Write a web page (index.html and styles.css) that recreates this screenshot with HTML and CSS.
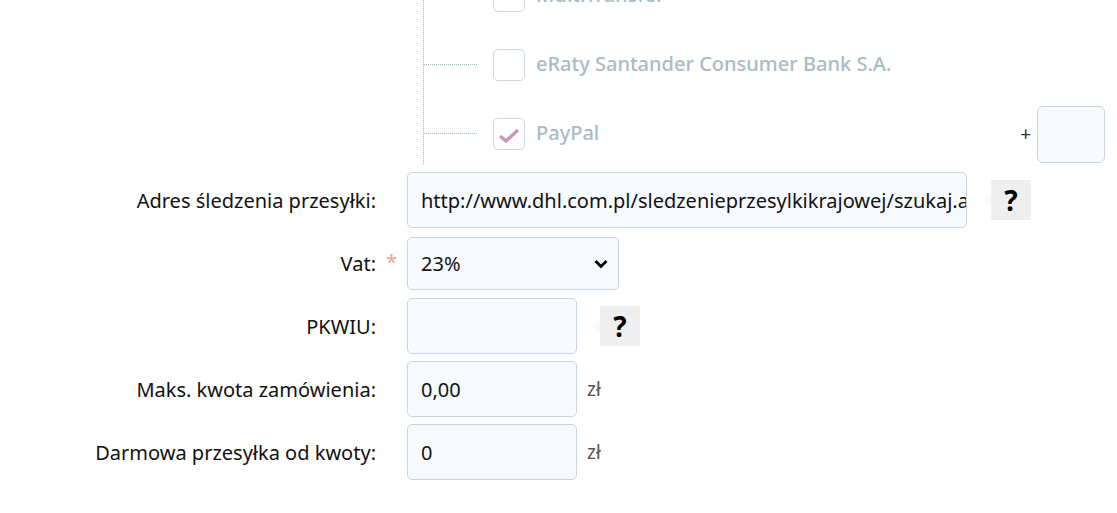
FILE: index.html
```html
<!DOCTYPE html>
<html lang="pl">
<head>
<meta charset="utf-8">
<title>Form</title>
<link rel="stylesheet" href="styles.css">
</head>
<body>
<div class="page">
  <div class="tree-wrap">
    <ul class="tree">
      <li class="tree-item">
        <span class="branch"></span>
        <span class="check"></span>
        <span class="tree-label">MultiTransfer</span>
      </li>
      <li class="tree-item">
        <span class="branch"></span>
        <span class="check"></span>
        <span class="tree-label">eRaty Santander Consumer Bank S.A.</span>
      </li>
      <li class="tree-item">
        <span class="branch"></span>
        <span class="check checked">
          <svg width="22" height="16" viewBox="0 0 22 16"><path d="M2 9 L8 14 L20 3" fill="none" stroke="#c898bb" stroke-width="3.4" stroke-linejoin="miter"/></svg>
        </span>
        <span class="tree-label">PayPal</span>
        <span class="extra">
          <span class="plus">+</span>
          <span class="extra-box"></span>
        </span>
      </li>
    </ul>
  </div>

  <form class="form">
    <div class="row">
      <label class="lbl">Adres śledzenia przesyłki:</label>
      <div class="ctrl">
        <div class="input wide">http://www.dhl.com.pl/sledzenieprzesylkikrajowej/szukaj.aspx</div>
        <span class="help">?</span>
      </div>
    </div>
    <div class="row">
      <label class="lbl req">Vat:<span class="star">*</span></label>
      <div class="ctrl">
        <div class="input select">
          <span>23%</span>
          <svg width="14" height="10" viewBox="0 0 14 10"><path d="M1.5 2 L7 7.5 L12.5 2" fill="none" stroke="#000" stroke-width="2.8"/></svg>
        </div>
      </div>
    </div>
    <div class="row">
      <label class="lbl">PKWIU:</label>
      <div class="ctrl">
        <div class="input short"></div>
        <span class="help">?</span>
      </div>
    </div>
    <div class="row">
      <label class="lbl">Maks. kwota zamówienia:</label>
      <div class="ctrl">
        <div class="input short">0,00</div>
        <span class="unit">zł</span>
      </div>
    </div>
    <div class="row">
      <label class="lbl">Darmowa przesyłka od kwoty:</label>
      <div class="ctrl">
        <div class="input short">0</div>
        <span class="unit">zł</span>
      </div>
    </div>
  </form>
</div>
</body>
</html>
```

FILE: styles.css
```css
* { box-sizing: border-box; }
html, body { margin: 0; padding: 0; background: #fff; }
body {
  font-family: "Noto Sans", "Open Sans", sans-serif;
  font-size: 20px;
  color: #111;
  width: 1117px;
  height: 513px;
  overflow: hidden;
}
.page { padding-right: 12px; }

.tree-wrap {
  padding-left: 423px;
  margin-top: -39px;
}
.tree {
  list-style: none;
  margin: 0;
  padding: 0;
  border-left: 1px dotted #a6bcbc;
  height: 204px;
}
.tree-item {
  height: 69px;
  display: flex;
  align-items: center;
}
.branch {
  width: 53px;
  border-top: 1px dotted #a6bcbc;
  margin-right: 16px;
}
.check {
  width: 32px;
  height: 32px;
  border: 1px solid #cad7e2;
  border-radius: 5px;
  background: #fff;
  display: flex;
  align-items: center;
  justify-content: center;
  flex: none;
}
.check svg { margin-top: 2px; margin-left: -1px; }
.tree-label {
  margin-left: 11px;
  color: #a8bbc6;
  font-weight: 500;
  font-size: 20px;
  margin-top: -2px;
}
.extra {
  margin-left: auto;
  display: flex;
  align-items: center;
  gap: 6px;
}
.plus { color: #333; font-size: 19px; }
.extra-box {
  width: 68px;
  height: 57px;
  border: 1px solid #c9d5e0;
  border-radius: 6px;
  background: #f7fbff;
  margin-top: 1px;
}

.form {
  display: flex;
  flex-direction: column;
  gap: 7px;
  margin-top: 7px;
}
.row {
  display: grid;
  grid-template-columns: 376px auto;
  column-gap: 31px;
  align-items: center;
}
.lbl {
  text-align: right;
  color: #111;
  position: relative;
}
.star {
  position: absolute;
  right: -21px;
  top: -2px;
  color: #f39a9a;
  font-size: 20px;
}
.ctrl {
  display: flex;
  align-items: center;
}
.input {
  height: 56px;
  border: 1px solid #c9d5e0;
  border-radius: 5px;
  background: #f7fbff;
  padding: 0 13px;
  display: flex;
  align-items: center;
  white-space: nowrap;
  overflow: hidden;
  color: #111;
}
.wide { width: 560px; }
.short { width: 170px; }
.select {
  width: 212px;
  height: 53px;
  margin: 2px 0 1px;
  justify-content: space-between;
  padding-right: 10px;
}
.help {
  width: 40px;
  height: 40px;
  background: #efefef;
  display: flex;
  align-items: center;
  justify-content: center;
  font-weight: 700;
  font-size: 28px;
  line-height: 1;
  color: #000;
  margin-left: 24px;
  position: relative;
}
.help::before {
  content: "";
  position: absolute;
  left: -8px;
  top: 13px;
  border-right: 8px solid #fafafa;
  border-top: 7px solid transparent;
  border-bottom: 7px solid transparent;
}
.row:nth-child(3) .help { margin-left: 23px; }
.unit {
  margin-left: 10px;
  color: #555;
  font-size: 19px;
}
```
